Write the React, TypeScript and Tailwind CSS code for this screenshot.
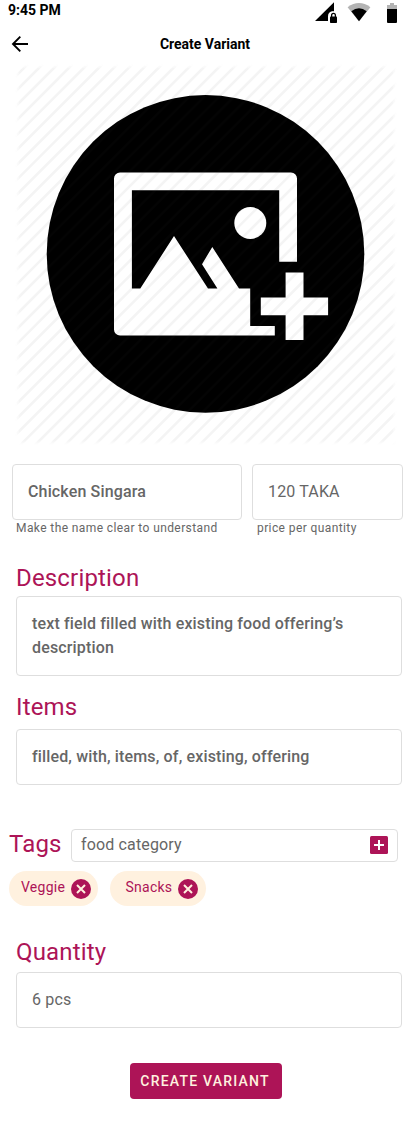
import React from "react";

function StatusBar() {
  return (
    <div className="flex h-6 items-start justify-between pl-2">
      <span className="pt-[2px] text-[14px] font-bold leading-4 text-black">9:45 PM</span>
      <svg width="100" height="24" viewBox="311 0 100 24">
        <path d="M315 21 L334 2.2 V11.6 A4.6 4.6 0 0 0 328 16.3 V21 Z" fill="#000" />
        <path d="M330 17v-2a3.5 3.5 0 0 1 7 0v2Z" fill="#fff" />
        <rect x="330" y="16.6" width="7" height="6.4" rx=".8" fill="#000" />
        <path d="M331.6 17v-1.6a1.9 2 0 0 1 3.8 0V17" fill="none" stroke="#000" strokeWidth="1.3" />
        <path d="M347.6 7.2 Q359 -1.2 370.4 7.2 L359 21.2Z" fill="#b3b3b3" />
        <path d="M351.3 11.3 Q359 5.2 366.7 11.3 L359 21.2Z" fill="#000" />
        <path d="M390 3h4v2h3v4h-10V5h3z" fill="#b3b3b3" />
        <path d="M387 9h10v13q0 1-1 1h-8q-1 0-1-1z" fill="#000" />
      </svg>
    </div>
  );
}

function AppBar() {
  return (
    <header className="grid h-10 grid-cols-[40px_1fr_40px] items-center">
      <svg className="ml-2" width="24" height="24" viewBox="0 0 24 24" fill="none" stroke="#000" strokeWidth="1.9">
        <path d="M20 12H5M12.3 4.7 5 12l7.3 7.3" />
      </svg>
      <h1 className="pr-px text-center text-[14px] font-bold leading-5 text-black">Create Variant</h1>
    </header>
  );
}

const stripeOffsets = Array.from({ length: 51 }, (_, i) => 92 + i * 14.93);

function ImagePlaceholder() {
  return (
    <svg className="ml-3 block" width="388" height="388" viewBox="12 64 388 388">
      <defs>
        <filter id="soften" x="-5%" y="-5%" width="110%" height="110%">
          <feGaussianBlur stdDeviation="1.7" />
        </filter>
        <mask id="edges" maskUnits="userSpaceOnUse" x="12" y="64" width="388" height="388">
          <rect x="18" y="67" width="376" height="375.5" fill="#fff" filter="url(#soften)" />
        </mask>
      </defs>
      <circle cx="205.5" cy="253.9" r="158.8" fill="#000" />
      <g fill="#fff">
        <path d="M120 172.4H291a6 6 0 0 1 6 6V261.8H279.2V190.3H131.9V288.6H140.3L174 236 208 288.6H217.4L202 264.2 212.3 247 239 288.6H250.2V326H274.8V335.4H120a6 6 0 0 1-6-6V178.4a6 6 0 0 1 6-6Z" />
        <circle cx="250.3" cy="223" r="16" />
        <path d="M285.6 272.6h17.9v24.8h24.6v17.9h-24.6v24.6h-17.9v-24.6h-24.8v-17.9h24.8z" />
      </g>
      <g mask="url(#edges)" stroke="#444" strokeOpacity=".06" strokeWidth="2.6">
        {stripeOffsets.map((o) => (
          <line key={o} x1={o - 460} y1="460" x2={o - 60} y2="60" />
        ))}
      </g>
    </svg>
  );
}

function Field({ children, className }: { children: React.ReactNode; className: string }) {
  return (
    <div className={"flex rounded border border-[#dedede] text-[16px] leading-6 text-[#666] " + className}>{children}</div>
  );
}

function Heading({ children, className = "" }: { children: React.ReactNode; className?: string }) {
  return <h2 className={"text-[24px] leading-7 tracking-[0.17px] text-[#ad1457] " + className}>{children}</h2>;
}

function Tag({ label, className }: { label: string; className: string }) {
  return (
    <div className={"flex h-[35px] items-center justify-between rounded-full bg-[#fff1df] " + className}>
      <span className="mt-[-3px] text-[14px] leading-5 tracking-[0.25px] text-[#ad1457]">{label}</span>
      <svg width="20" height="20" viewBox="0 0 20 20">
        <circle cx="10" cy="10" r="10" fill="#ad1457" />
        <path d="m6 6 8 8m0-8-8 8" stroke="#fff1df" strokeWidth="2" />
      </svg>
    </div>
  );
}

export default function App() {
  return (
    <main className="flex h-[1131px] w-[411px] flex-col bg-white font-[Roboto,sans-serif]">
      <StatusBar />
      <AppBar />
      <ImagePlaceholder />

      <section className="mt-3 flex gap-[10px] pl-3">
        <div className="w-[230px]">
          <Field className="h-14 items-center pl-[15px] font-medium tracking-[0.15px]">Chicken Singara</Field>
          <p className="pl-1 text-[12px] leading-4 tracking-[0.4px] text-[#666]">Make the name clear to understand</p>
        </div>
        <div className="w-[151px]">
          <Field className="h-14 items-center pl-[15px] tracking-[0.15px]">120 TAKA</Field>
          <p className="pl-[5px] text-[12px] leading-4 tracking-[0.4px] text-[#666]">price per quantity</p>
        </div>
      </section>

      <section className="mt-7 w-[402px] pl-4">
        <Heading>Description</Heading>
        <Field className="mt-1 h-20 pl-[15px] pr-8 pt-[15px] font-medium tracking-[0.15px]">
          text field filled with existing food offering’s description
        </Field>
      </section>

      <section className="mt-[17px] w-[402px] pl-4">
        <Heading>Items</Heading>
        <Field className="mt-2 h-14 items-center pl-[15px] font-medium tracking-[0.15px]">
          filled, with, items, of, existing, offering
        </Field>
      </section>

      <section className="mt-11 pl-[9px]">
        <div className="flex w-[389px] items-center">
          <Heading className="w-[62px] pb-1">Tags</Heading>
          <Field className="h-[33px] grow items-center justify-between pl-[9px] pr-[9px] tracking-[0.15px]">
            <span className="-mt-[2px]">food category</span>
            <svg className="mb-px" width="18" height="18" viewBox="0 0 18 18">
              <rect width="18" height="18" rx="1.5" fill="#ad1457" />
              <path d="M9 4v10M4 9h10" stroke="#fff" strokeWidth="2" />
            </svg>
          </Field>
        </div>
        <div className="mt-[9px] flex gap-3">
          <Tag label="Veggie" className="w-[89px] pl-3 pr-[7px]" />
          <Tag label="Snacks" className="w-24 pl-[15.5px] pr-2" />
        </div>
      </section>

      <section className="mt-8 w-[402px] pl-4">
        <Heading>Quantity</Heading>
        <Field className="mt-[6px] h-14 items-center pl-[15px] tracking-[0.15px]">6 pcs</Field>
      </section>

      <button className="ml-[130px] mt-[35px] h-9 w-[152px] rounded bg-[#ad1457] pr-[2px] text-[14px] font-medium leading-4 tracking-[1.2px] text-[#fff1df]">
        CREATE VARIANT
      </button>
    </main>
  );
}
